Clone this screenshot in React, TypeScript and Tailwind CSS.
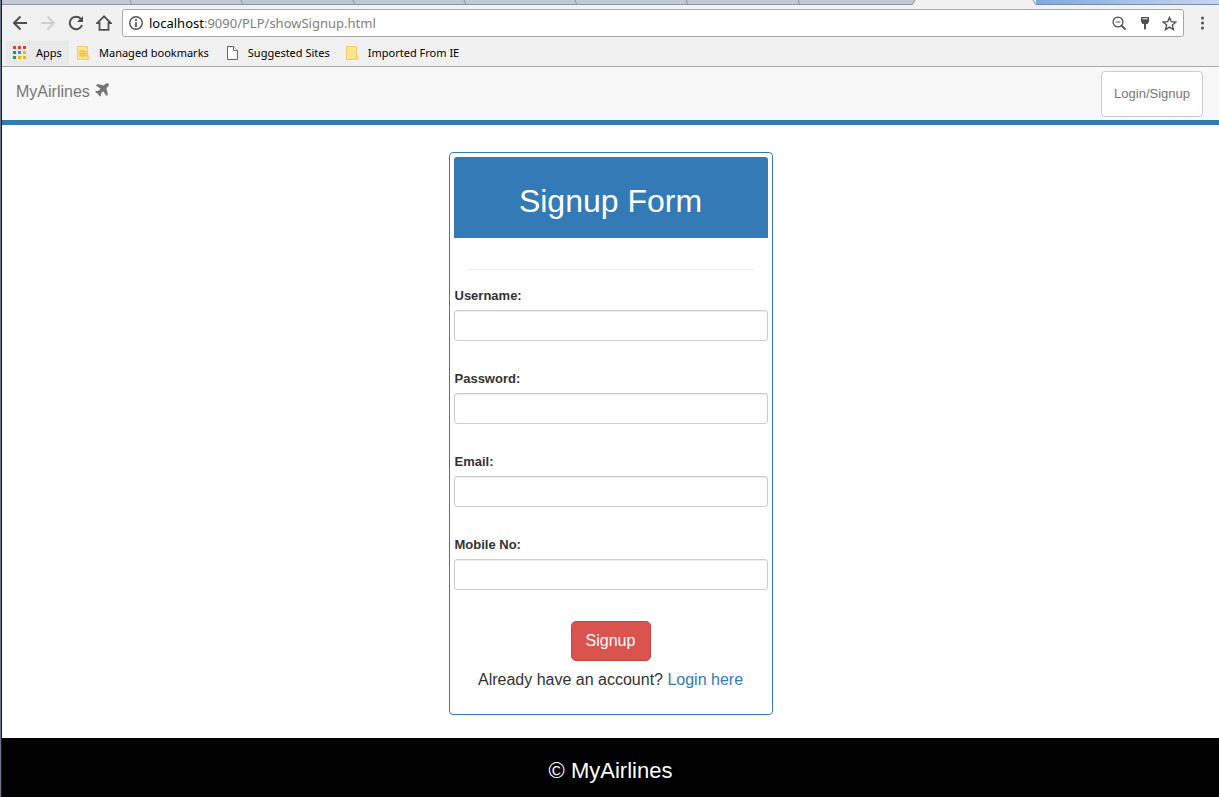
import React from "react";

const tabs = [
  "w-[131px] bg-[#c3cad3]",
  "flex-1 bg-[#c3cad3]",
  "flex-1 bg-[#bcc8d4]",
  "flex-1 bg-[#bfcad5]",
  "flex-1 bg-[#bfcad5]",
  "flex-1 bg-[#c1cad3]",
  "flex-1 bg-[#c3c9d0]",
  "flex-1 bg-[#c3c9d0]",
];

const appColors = [
  "#db4437", "#db4437", "#db4437",
  "#0f9d58", "#4285f4", "#f4b400",
  "#0f9d58", "#f4b400", "#f4b400",
];

const fields = [
  { id: "username", label: "Username:", type: "text" },
  { id: "password", label: "Password:", type: "password" },
  { id: "email", label: "Email:", type: "email" },
  { id: "mobile", label: "Mobile No:", type: "tel" },
];

function TabStrip() {
  return (
    <div className="flex h-[5px]">
      <div className="flex w-[910px] border-b border-[#8e979f]">
        {tabs.map((color, i) => (
          <div key={i} className={`flex justify-end ${color}`}>
            {i < tabs.length - 1 && (
              <svg width="5" height="5" viewBox="0 0 5 5" fill="none" stroke="#8b959e">
                <path d="M2 0 4 5" />
              </svg>
            )}
          </div>
        ))}
      </div>
      <svg width="124" height="5" viewBox="0 0 124 5">
        <path d="M0 0H3L0 5Z" fill="#c3c9d0" />
        <path d="M3 0 0 5M121 0 124 5" stroke="#8e979f" fill="none" />
      </svg>
      <div className="flex-1 border-b border-[#7590b0] bg-linear-to-r from-[#7fa8dc] via-[#a5c1e6] to-[#c4d6ee]" />
    </div>
  );
}

function Toolbar() {
  return (
    <div className="flex h-9 items-center pr-[9px] pl-[10px] text-[#505050]">
      <div className="flex gap-3">
        <button aria-label="Back">
          <svg width="16" height="16" viewBox="0 0 16 16" fill="none" stroke="currentColor" strokeWidth="2">
            <path d="M15 8H2M8.500 1.500 2 8l6.500 6.500" />
          </svg>
        </button>
        <button aria-label="Forward" className="text-[#d0d0d0]">
          <svg width="16" height="16" viewBox="0 0 16 16" fill="none" stroke="currentColor" strokeWidth="2">
            <path d="M1 8h13M7.500 1.500 14 8l-6.500 6.500" />
          </svg>
        </button>
        <button aria-label="Reload">
          <svg width="16" height="16" viewBox="0 0 16 16" fill="none" stroke="currentColor" strokeWidth="2">
            <path d="M14 10A6.300 6.300 0 1 1 12.700 3.700L14 5" />
            <path d="M15 1v6H9Z" fill="currentColor" stroke="none" />
          </svg>
        </button>
        <button aria-label="Home">
          <svg width="16" height="16" viewBox="0 0 16 16" fill="none" stroke="currentColor" strokeWidth="1.800">
            <path d="M8 1.300 1.200 8H3.500v6.800h9V8h2.300Z" />
          </svg>
        </button>
      </div>
      <div className="ml-[10px] flex h-7 flex-1 items-center gap-1 rounded-[3px] border border-[#a8a8a8] bg-white pr-[6px] pl-[6px]">
        <svg width="14" height="14" viewBox="0 0 14 14" fill="none" stroke="currentColor">
          <circle cx="7" cy="7" r="6.200" strokeWidth="1.400" />
          <path d="M7 6.200V11M7 3v2" strokeWidth="1.700" />
        </svg>
        <div className="flex-1 pl-[2px] font-['Noto_Sans',sans-serif] text-[13px] leading-5 text-[#808080]">
          <span className="text-black">localhost</span>:9090/PLP/showSignup.html
        </div>
        <div className="flex gap-[10px]">
          <button aria-label="Zoom">
            <svg width="15" height="15" viewBox="0 0 15 15" fill="none" stroke="currentColor" strokeWidth="1.300">
              <circle cx="6" cy="6" r="4.900" />
              <path d="m9.600 9.600 4 4" strokeWidth="2" />
              <path d="M3.700 6h4.600" strokeWidth="1" />
            </svg>
          </button>
          <button aria-label="Saved password">
            <svg width="15" height="15" viewBox="0 0 15 15" fill="currentColor">
              <path fillRule="evenodd" d="M4 1h8v4.500L10.500 8H9v5l-1 .800-1-.800V8H5.500L4 5.500ZM5.500 2.200v1h5v-1Z" />
            </svg>
          </button>
          <button aria-label="Bookmark this page">
            <svg width="15" height="15" viewBox="0 0 15 15" fill="none" stroke="currentColor" strokeWidth="1.300">
              <path d="m7.500 1.400 1.700 4.200 4.700.4-3.600 3 1.100 4.600-3.900-2.500-3.900 2.500L4.700 9 1.100 6l4.700-.4Z" />
            </svg>
          </button>
        </div>
      </div>
      <button aria-label="Menu" className="ml-[11px]">
        <svg width="15" height="16" viewBox="0 0 15 16" fill="currentColor">
          <circle cx="7.500" cy="3" r="1.500" />
          <circle cx="7.500" cy="8" r="1.500" />
          <circle cx="7.500" cy="13" r="1.500" />
        </svg>
      </button>
    </div>
  );
}

function Folder({ managed = false }: { managed?: boolean }) {
  return (
    <svg width="13" height="14" viewBox="0 0 13 14">
      <path d="M.5.500h10v9h1.500v4H.5Z" fill="#fde48d" stroke="#efcf6a" />
      <path d="M10.500 9.500v4" stroke="#efcf6a" />
      {managed && <path d="M3 5h6M3 7.500h6M3 10h6M3 5v5M6 5v5M9 5v5" stroke="#e5b73b" fill="none" />}
    </svg>
  );
}

function BookmarksBar() {
  return (
    <nav
      aria-label="Bookmarks"
      className="flex h-[26px] items-center border-b border-[#a8a8a8] pb-[2px] pl-1 font-['Noto_Sans',sans-serif] text-[11px] leading-4 text-black"
    >
      <a href="#apps" className="flex h-6 w-[63px] items-center gap-[10px] bg-[#e9e9e9] pl-[7px]">
        <svg width="13" height="13" viewBox="0 0 13 13">
          {appColors.map((color, i) => (
            <rect key={i} x={(i % 3) * 5} y={Math.floor(i / 3) * 5} width="3" height="3" fill={color} />
          ))}
        </svg>
        Apps
      </a>
      <a href="#managed" className="ml-2 flex items-center gap-[9px]">
        <Folder managed />
        Managed bookmarks
      </a>
      <a href="#suggested" className="ml-[18px] flex items-center gap-[10px]">
        <svg width="11" height="14" viewBox="0 0 11 14" fill="#fff" stroke="#666">
          <path d="M.5.500h6l4 4v9H.5Z" />
          <path d="M6.500.500v4h4" />
        </svg>
        Suggested Sites
      </a>
      <a href="#imported" className="ml-4 flex items-center gap-[9px]">
        <Folder />
        Imported From IE
      </a>
    </nav>
  );
}

function SiteHeader() {
  return (
    <header className="flex h-[58px] items-start justify-between border-b-5 border-[#337ab7] bg-[#f8f8f8] pt-1 pr-4 pl-[14px] text-[#777]">
      <a href="#home" className="flex items-center gap-[5px] pt-[9px] text-base leading-6">
        MyAirlines
        <svg width="14" height="14" viewBox="0 0 14 14" fill="currentColor" className="mb-1">
          <path d="M13.400.6c-.9-.8-2.300-.4-3.200.5L8.700 2.600 2.500 1 .9 2.400l4.700 3.300-2.400 2.400-2.100-.2-1 1.100 2.900 1.900 1.900 2.900 1.100-1-.2-2.100 2.400-2.400 3.300 4.700 1.400-1.600-1.500-6.200 1.500-1.500c.9-.9 1.300-2.300.5-3.100Z" />
        </svg>
      </a>
      <button className="h-[46px] rounded border border-[#ccc] bg-white px-3 text-[13px]">
        Login/Signup
      </button>
    </header>
  );
}

function SignupForm() {
  return (
    <form className="w-[324px] rounded border border-[#337ab7] p-1 text-[#333]">
      <h1 className="rounded-t-[3px] bg-[#337ab7] pt-[26px] pb-[19px] text-center text-[32px] leading-9 text-white">
        Signup Form
      </h1>
      <hr className="mx-[14px] mt-[31px] mb-4 border-[#eee]" />
      <div className="flex flex-col gap-7">
        {fields.map((field) => (
          <div key={field.id} className="flex flex-col gap-1">
            <label htmlFor={field.id} className="pl-px text-[13px] leading-5 font-bold">
              {field.label}
            </label>
            <input
              id={field.id}
              name={field.id}
              type={field.type}
              className="h-[31px] w-full rounded-[3px] border border-[#ccc] bg-white px-3 text-sm shadow-[inset_0_1px_1px_rgba(0,0,0,0.075)]"
            />
          </div>
        ))}
      </div>
      <div className="flex flex-col items-center pt-[31px] pb-[18px]">
        <button
          type="button"
          className="h-10 w-20 rounded-[5px] border border-[#d43f3a] bg-[#d9534f] text-base text-white"
        >
          Signup
        </button>
        <p className="pt-[7px] text-base leading-6">
          Already have an account?{" "}
          <a href="#login" className="text-[#337ab7]">
            Login here
          </a>
        </p>
      </div>
    </form>
  );
}

export default function App() {
  return (
    <div className="flex min-h-screen border-l border-[#6b7787] bg-white font-['Liberation_Sans',Arial,sans-serif]">
      <div className="flex min-w-0 flex-1 flex-col border-l border-[#0d1a2b]">
        <div className="bg-[#f1f1f1]">
          <TabStrip />
          <Toolbar />
          <BookmarksBar />
        </div>
        <SiteHeader />
        <main className="flex flex-1 items-start justify-center pt-[27px] pb-[23px]">
          <SignupForm />
        </main>
        <footer className="bg-black pt-5 pb-[13px] text-center text-[22px] leading-[26px] text-white">
          © MyAirlines
        </footer>
      </div>
    </div>
  );
}
